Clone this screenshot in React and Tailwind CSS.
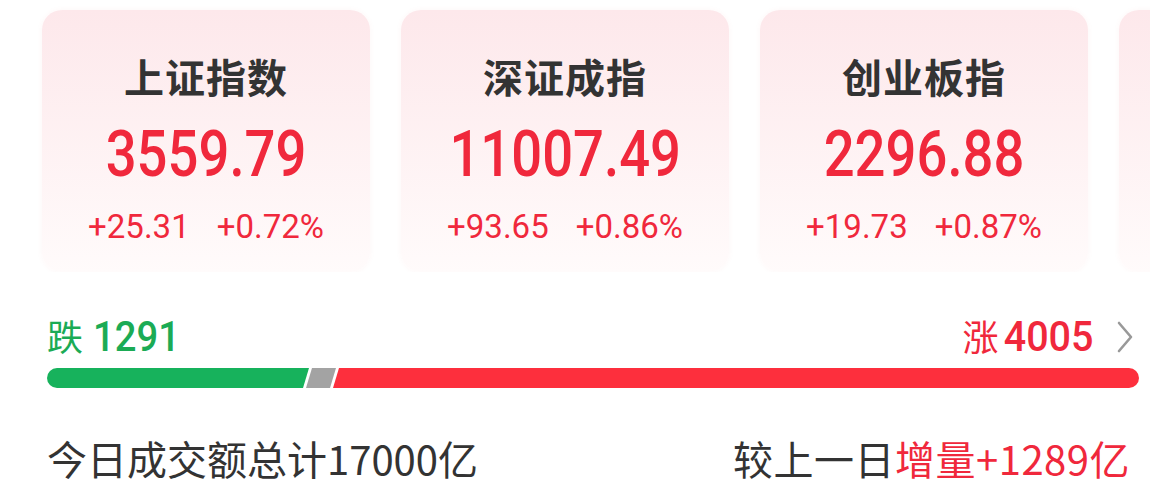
import React from "react";

const cjk = "font-['Noto_Sans_CJK_SC','Noto_Sans',sans-serif]";
const num = "font-['Roboto','Noto_Sans_CJK_SC',sans-serif]";

const indices = [
  { name: "上证指数", value: "3559.79", change: "+25.31", pct: "+0.72%" },
  { name: "深证成指", value: "11007.49", change: "+93.65", pct: "+0.86%" },
  { name: "创业板指", value: "2296.88", change: "+19.73", pct: "+0.87%" },
];

const cardBox =
  "w-[328px] h-[262px] shrink-0 rounded-[20px] bg-linear-to-b from-[#fde8eb] to-[#fffbfb] shadow-[0_0_6px_rgba(240,40,60,0.04)]";

function IndexCard({ item }) {
  return (
    <div className={`${cardBox} flex flex-col items-center pt-[46px]`}>
      <div className={`${cjk} text-[40px] leading-none font-semibold text-[#333333] tracking-[1px]`}>
        {item.name}
      </div>
      <div className={`${num} mt-[27px] text-[64px] leading-none font-medium text-[#f0283c] scale-x-[0.85]`}>
        {item.value}
      </div>
      <div className={`${num} mt-[23px] text-[33px] leading-none text-[#f0283c] flex gap-[27px]`}>
        <span>{item.change}</span>
        <span>{item.pct}</span>
      </div>
    </div>
  );
}

export default function App() {
  return (
    <div className="w-[1150px] h-[498px] bg-white overflow-hidden">
      {/* index cards, the fourth one is cut off by the screen edge */}
      <div className="flex gap-[31px] pl-[42px] pt-[10px] overflow-hidden">
        {indices.map((item) => (
          <IndexCard key={item.name} item={item} />
        ))}
        <div className={cardBox} />
      </div>

      {/* rise / fall */}
      <div className="mt-[44px] ml-[47px] w-[1092px]">
        <div className="flex items-baseline justify-between h-[42px] leading-none">
          <div className="flex items-baseline text-[#1bab55]">
            <span className={`${cjk} text-[36px]`}>跌</span>
            <span className={`${num} ml-[10px] text-[42px] font-medium inline-block origin-left scale-x-[0.91]`}>1291</span>
          </div>
          <div className="flex items-baseline text-[#f0283c]">
            <span className={`${cjk} text-[36px] mr-[-1px]`}>涨</span>
            <span className={`${num} text-[42px] font-medium inline-block origin-right scale-x-[0.94]`}>4005</span>
            <svg className="ml-[24px] self-center" width="16" height="32" viewBox="0 0 16 32" fill="none">
              <path d="M2 2 L14 16 L2 30" stroke="#999999" strokeWidth="2.6" strokeLinecap="round" strokeLinejoin="round" />
            </svg>
            <span className="w-[6px]" />
          </div>
        </div>

        <div className="mt-[10px] flex h-[20px]">
          <div className="w-[262px] h-full rounded-l-full bg-[#17b25c] [clip-path:polygon(0_0,100%_0,calc(100%-6px)_100%,0_100%)]" />
          <div className="ml-[-3px] w-[30px] h-full bg-[#a3a3a3] [clip-path:polygon(6px_0,100%_0,calc(100%-6px)_100%,0_100%)]" />
          <div className="ml-[-3px] flex-1 h-full rounded-r-full bg-[#fd2f3d] [clip-path:polygon(6px_0,100%_0,100%_100%,0_100%)]" />
        </div>

        <div className={`${cjk} mt-[50px] flex justify-between text-[40px] leading-none`}>
          <div className="text-[#333333]">今日成交额总计17000亿</div>
          <div className="pr-[9px] tracking-[0.5px]">
            <span className="text-[#333333]">较上一日</span>
            <span className="text-[#f0283c]">增量+1289亿</span>
          </div>
        </div>
      </div>
    </div>
  );
}
